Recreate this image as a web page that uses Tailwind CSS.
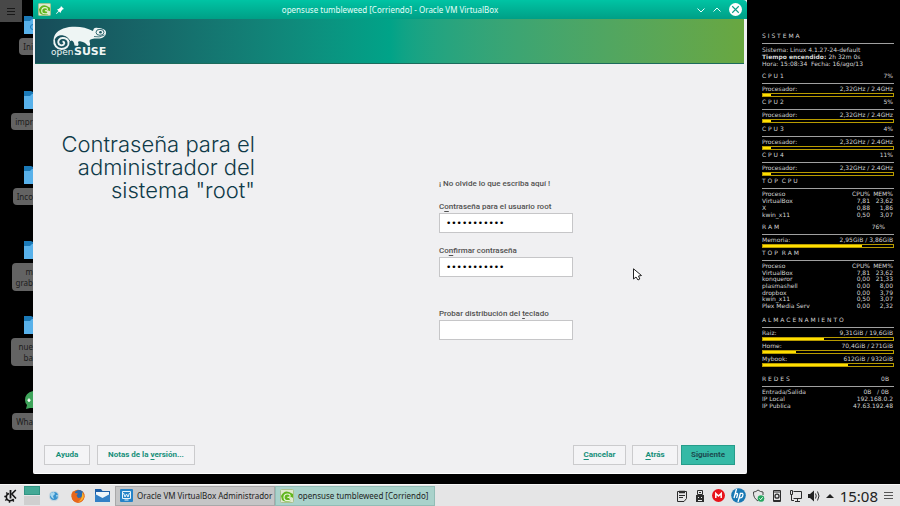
<!DOCTYPE html>
<html lang="es">
<head>
<meta charset="utf-8">
<title>Escritorio</title>
<script src="https://cdn.jsdelivr.net/npm/@tailwindcss/browser@4"></script>
</head>
<body class="h-screen flex flex-col overflow-hidden bg-black font-['Noto_Sans','Liberation_Sans',sans-serif]">
<svg class="hidden">
  <symbol id="folder" viewBox="0 0 9 18"><path d="M0 0H7L9 1V18H0Z" fill="#1b7ab8"/><path d="M0 5H6L8 3H9V18H0Z" fill="#58b1ea"/></symbol>
  <symbol id="gecko" viewBox="0 0 14 14"><rect x=".5" y=".5" width="13" height="13" rx="1" fill="#dfe8cf" stroke="#a9c08c"/><path d="M1 7Q4 1 9 3L13 5V9Q11 7 9 9L11 12Q5 14 2 11Z" fill="#62b51f"/><path d="M11 11Q4 13 4 8.500Q4 5 7.500 5Q10.500 5 10 7.500Q9 9 7.500 8" fill="none" stroke="#eaf6d8" stroke-width="1.200"/></symbol>
</svg>

<main class="flex flex-1 min-h-0">
  <nav class="w-[33px] shrink-0 overflow-hidden" aria-label="Escritorio">
    <button class="absolute left-0 top-0 size-[22px] bg-[#484848] flex items-center justify-center" aria-label="Menú">
      <svg class="w-2 h-2" viewBox="0 0 8 8" stroke="#191919"><path d="M0 1.500H8M0 4.500H8M0 7.500H8"/></svg>
    </button>
    <ul class="mt-4 text-[8px] leading-[11px] text-[#1c1c1c] text-right">
      <li class="h-[75px] flex flex-col items-end gap-1"><svg class="w-[9px] h-[18px] shrink-0"><use href="#folder"/><circle cx="9" cy="11" r="2.500" fill="none" stroke="#1b7ab8"/></svg><span class="rounded-l-sm bg-[#636363] pl-1 py-[3px]">Ini</span></li>
      <li class="h-[75px] flex flex-col items-end gap-1"><svg class="w-[9px] h-[18px] shrink-0"><use href="#folder"/></svg><span class="rounded-l-sm bg-[#636363] pl-1 py-[3px]">impr</span></li>
      <li class="h-[75px] flex flex-col items-end gap-1"><svg class="w-[9px] h-[18px] shrink-0"><use href="#folder"/></svg><span class="rounded-l-sm bg-[#636363] pl-1 py-[3px]">Inco</span></li>
      <li class="h-[75px] flex flex-col items-end gap-1"><svg class="w-[9px] h-[18px] shrink-0"><use href="#folder"/></svg><span class="rounded-l-sm bg-[#636363] pl-1 py-[3px]">m<br>grab</span></li>
      <li class="h-[75px] flex flex-col items-end gap-1"><svg class="w-[9px] h-[18px] shrink-0"><use href="#folder"/></svg><span class="rounded-l-sm bg-[#636363] pl-2 py-[3px]">nue<br>ba</span></li>
      <li class="h-[75px] flex flex-col items-end gap-1"><svg class="w-[9px] h-[18px] shrink-0" viewBox="0 0 9 18"><path d="M9 0Q1 2 1 9Q1 12 3 14L2 18L6 17H9Z" fill="#3fa45b"/><path d="M5 7.500V11M3.500 9.200H6.500" stroke="#fff" stroke-width="1.500"/></svg><span class="rounded-l-sm bg-[#636363] pl-1 py-[3px]">Wha</span></li>
    </ul>
  </nav>

  <section class="relative flex-1 min-w-0 mb-[10px] flex flex-col rounded-b-[2px] bg-[#f0f0f2] border-b border-b-white">
    <header class="h-[19px] shrink-0 flex items-center px-[5px] bg-linear-to-b from-[#00c4a4] to-[#009f86] rounded-tr-sm">
      <div class="w-16 flex items-center gap-[5px]">
        <svg class="size-[13px]"><use href="#gecko"/></svg>
        <svg class="size-2" viewBox="0 0 8 8"><path d="M5 0L8 3L6.500 3.500L5 5.500L4.500 7L3 5.500L.5 8L0 7.500L2.500 5L1 3.500L2.500 3L4.500 1.500Z" fill="#fff"/></svg>
      </div>
      <h1 class="flex-1 text-center text-[8px] leading-[12px] text-[#e4fff9] whitespace-nowrap">opensuse tumbleweed [Corriendo] - Oracle VM VirtualBox</h1>
      <div class="w-16 flex items-center justify-end gap-2">
        <button aria-label="Minimizar"><svg class="w-2 h-2" viewBox="0 0 8 8" fill="none" stroke="#e9fffb"><path d="M.5 2.500L4 6L7.500 2.500"/></svg></button>
        <button aria-label="Maximizar"><svg class="w-2 h-2" viewBox="0 0 8 8" fill="none" stroke="#e9fffb"><path d="M.5 5.500L4 2L7.500 5.500"/></svg></button>
        <button aria-label="Cerrar"><svg class="size-[13px]" viewBox="0 0 12 12"><circle cx="6" cy="6" r="6" fill="#fff"/><path d="M3 3L9 9M9 3L3 9" stroke="#0b9d87"/></svg></button>
      </div>
    </header>

    <div class="flex-1 min-h-0 flex flex-col ml-[2px] mr-[3px]">
      <div class="h-[45px] shrink-0 border-b border-b-[#1c6b5c] bg-linear-to-r from-[#174c59] from-0% via-[#00a388] via-50% to-[#69a740] to-100%">
        <svg class="w-[80px] h-[44px]" viewBox="35 19 80 44" role="img" aria-label="openSUSE">
          <path d="M53.500 40C54 32 61 28.500 69 27C78 26 86 27 93 31C93.500 28 95 27 98 28C102 28 106 30 106 32C106.500 37 101 39 97 38.500C93 38.500 90.500 39 89.500 40.500C89.500 43 91 44 89.500 46L87.500 45.500Q85 42 81 41.500C79.500 41 78.500 41 78 42C78.500 44 79 45 77.500 46L74.500 45.500Q74 41 71.500 40.500L68.500 42C68 37.500 65 35.500 61.500 35.500C57.500 35.500 55 37.500 54.500 41Z" fill="#eef5f4"/>
          <path d="M54.300 40C53.500 45 57 49 61.500 49C66 49 69 46 68.500 42.500C68 39.500 65.500 37.800 62.500 38C59.500 38.200 58 40.500 58.300 42.500C58.700 45.500 62 46 63.700 44.500C65 43 64 41.500 62.500 41.700" fill="none" stroke="#eef5f4" stroke-width="1.900"/>
          <path d="M55.500 41.500C56 37.500 59 35.800 62 35.900C66 36 69 38.500 70 41.500" fill="none" stroke="#174f5b" stroke-width=".9"/>
          <ellipse cx="100" cy="32.300" rx="4" ry="3" fill="none" stroke="#1d5a62" stroke-width=".9"/><circle cx="100.500" cy="32.300" r="1.300" fill="#1d5a62"/>
          <path d="M94 36.500Q99 38 104.500 35" fill="none" stroke="#1d5a62" stroke-width=".8"/>
          <text x="51" y="55" font-family="DejaVu Sans" font-size="9" fill="#eef5f4">open</text>
          <text x="74" y="55" font-family="DejaVu Sans" font-weight="bold" font-size="11" fill="#eef5f4">SUSE</text>
        </svg>
      </div>

      <div class="flex-1 flex font-[Roboto,'Liberation_Sans',sans-serif]">
        <h2 class="w-[220px] pt-[69px] flex flex-col items-end font-[Inter,sans-serif] font-light text-[22px] leading-[23px] text-[#0f3a48] whitespace-nowrap"><span>Contraseña para el</span><span>administrador del</span><span>sistema "root"</span></h2>
        <form id="clave" class="ml-[184px] w-[134px] pt-[114px] text-[8px] leading-[12px] font-medium text-[#505050] whitespace-nowrap">
          <p>¡ No olvide lo que escriba aquí !</p>
          <label for="p1" class="block mt-[11px]">C<span class="underline underline-offset-2">o</span>ntraseña para el usuario root</label>
          <input id="p1" type="password" value="tumbleweed1" class="block w-full h-5 px-[6px] bg-white border border-[#c6c6c8] text-[9px] text-black font-['DejaVu_Sans',sans-serif]">
          <label for="p2" class="block mt-[12px]">Co<span class="underline underline-offset-2">n</span>firmar contraseña</label>
          <input id="p2" type="password" value="tumbleweed1" class="block w-full h-5 px-[6px] bg-white border border-[#c6c6c8] text-[9px] text-black font-['DejaVu_Sans',sans-serif]">
          <label for="p3" class="block mt-[31px]">Probar distribución del <span class="underline underline-offset-2">t</span>eclado</label>
          <input id="p3" type="text" class="block w-full h-5 px-[6px] bg-white border border-[#c6c6c8] text-[9px]">
        </form>
      </div>

      <footer class="flex items-center pl-[9px] pr-[9px] pb-[8px] text-[8px] font-bold text-[#168f79] font-[Roboto,'Liberation_Sans',sans-serif]">
        <button class="h-5 w-[46px] border border-[#cbcbcd] bg-[#f4f4f6]">Ayuda</button>
        <button class="h-5 w-[98px] ml-[7px] border border-[#cbcbcd] bg-[#f4f4f6]">Notas de la <span class="underline underline-offset-2">v</span>ersión...</button>
        <button class="h-5 w-[53px] ml-auto border border-[#cbcbcd] bg-[#f4f4f6]"><span class="underline underline-offset-2">C</span>ancelar</button>
        <button class="h-5 w-[46px] ml-[6px] border border-[#cbcbcd] bg-[#f4f4f6]"><span class="underline underline-offset-2">A</span>trás</button>
        <button form="clave" class="h-5 w-[54px] ml-[3px] border border-[#269c8a] bg-[#35b9a6] text-[#1c4c50]">S<span class="underline underline-offset-2">i</span>guiente</button>
      </footer>
    </div>
    <svg class="absolute left-[600px] top-[268px] w-[9px] h-[13px]" viewBox="0 0 9 13"><path d="M.5 .8V11L3 9L5 12L6.800 11L5.500 8L8.500 7.500Z" fill="#fff" stroke="#222"/></svg>
  </section>

  <aside class="w-[153px] shrink-0 pl-[15px] pr-[6px] pt-[31px] font-['DejaVu_Sans',sans-serif] text-[6px] leading-[9px] text-[#d4d4d4] whitespace-nowrap">
    <h3 class="leading-[10px] pb-[2px] border-b border-[#a0a0a0]">S I S T E M A</h3>
    <div class="pt-[2px] leading-[7px]">
      <p>Sistema: Linux 4.1.27-24-default</p><p class="font-bold">Tiempo encendido: <span class="font-normal">2h 32m 0s</span></p><p>Hora: 15:08:34&nbsp; Fecha: 16/ago/13</p>
    </div>
    <div class="mt-1 h-[105px] grid grid-rows-4">
      <div><h3 class="flex justify-between leading-[10px] pr-px pb-[2px] border-b border-[#a0a0a0]">C P U 1<span>7%</span></h3><p class="flex justify-between pr-px">Procesador:<span>2,32GHz / 2.4GHz</span></p><div class="h-1 border border-[#b89b00]"><div class="h-full bg-[#ffdf00]" style="width:6%"></div></div></div>
      <div><h3 class="flex justify-between leading-[10px] pr-px pb-[2px] border-b border-[#a0a0a0]">C P U 2<span>5%</span></h3><p class="flex justify-between pr-px">Procesador:<span>2,32GHz / 2.4GHz</span></p><div class="h-1 border border-[#b89b00]"><div class="h-full bg-[#ffdf00]" style="width:6%"></div></div></div>
      <div><h3 class="flex justify-between leading-[10px] pr-px pb-[2px] border-b border-[#a0a0a0]">C P U 3<span>4%</span></h3><p class="flex justify-between pr-px">Procesador:<span>2,32GHz / 2.4GHz</span></p><div class="h-1 border border-[#b89b00]"><div class="h-full bg-[#ffdf00]" style="width:6%"></div></div></div>
      <div><h3 class="flex justify-between leading-[10px] pr-px pb-[2px] border-b border-[#a0a0a0]">C P U 4<span>11%</span></h3><p class="flex justify-between pr-px">Procesador:<span>2,32GHz / 2.4GHz</span></p><div class="h-1 border border-[#b89b00]"><div class="h-full bg-[#ffdf00]" style="width:6%"></div></div></div>
    </div>
    <h3 class="leading-[10px] pb-[2px] border-b border-[#a0a0a0]">T O P&nbsp; C P U</h3>
    <table class="w-full h-[27px] mt-[2px] leading-[6px] text-right">
      <tr><th class="font-normal text-left">Proceso</th><th class="font-normal w-6">CPU%</th><th class="font-normal w-6 pr-px">MEM%</th></tr>
      <tr><td class="text-left">VirtualBox</td><td>7,81</td><td class="pr-px">23,62</td></tr>
      <tr><td class="text-left">X</td><td>0,88</td><td class="pr-px">1,86</td></tr>
      <tr><td class="text-left">kwin_x11</td><td>0,50</td><td class="pr-px">3,07</td></tr>
    </table>
    <h3 class="mt-1 flex justify-between leading-[10px] pb-[2px] pr-[9px] border-b border-[#a0a0a0]">R A M<span>76%</span></h3>
    <p class="flex justify-between pr-px">Memoria:<span>2,95GiB / 3,86GiB</span></p><div class="h-1 border border-[#b89b00]"><div class="h-full bg-[#ffdf00]" style="width:76%"></div></div>
    <h3 class="leading-[10px] pb-[2px] border-b border-[#a0a0a0]">T O P&nbsp; R A M</h3>
    <table class="w-full h-[46px] mt-[2px] leading-[6px] text-right">
      <tr><th class="font-normal text-left">Proceso</th><th class="font-normal w-6">CPU%</th><th class="font-normal w-6 pr-px">MEM%</th></tr>
      <tr><td class="text-left">VirtualBox</td><td>7,81</td><td class="pr-px">23,62</td></tr>
      <tr><td class="text-left">konqueror</td><td>0,00</td><td class="pr-px">21,33</td></tr>
      <tr><td class="text-left">plasmashell</td><td>0,00</td><td class="pr-px">8,00</td></tr>
      <tr><td class="text-left">dropbox</td><td>0,00</td><td class="pr-px">3,79</td></tr>
      <tr><td class="text-left">kwin_x11</td><td>0,50</td><td class="pr-px">3,07</td></tr>
      <tr><td class="text-left">Plex Media Serv</td><td>0,00</td><td class="pr-px">2,32</td></tr>
    </table>
    <h3 class="mt-[6px] leading-[10px] pb-[2px] border-b border-[#a0a0a0]">A L M A C E N A M I E N T O</h3>
    <p class="flex justify-between pr-px">Raiz:<span>9,31GiB / 19,6GiB</span></p><div class="h-1 border border-[#b89b00]"><div class="h-full bg-[#ffdf00]" style="width:47%"></div></div>
    <p class="flex justify-between pr-px">Home:<span>70,4GiB / 271GiB</span></p><div class="h-1 border border-[#b89b00]"><div class="h-full bg-[#ffdf00]" style="width:25%"></div></div>
    <p class="flex justify-between pr-px">Mybook:<span>612GiB / 932GiB</span></p><div class="h-1 border border-[#b89b00]"><div class="h-full bg-[#ffdf00]" style="width:65%"></div></div>
    <h3 class="mt-[7px] flex justify-between leading-[10px] pb-[2px] pr-[5px] border-b border-[#a0a0a0]">R E D E S<span>0B</span></h3>
    <table class="w-full h-5 mt-[2px] leading-[6px]">
      <tr><th class="font-normal text-left">Entrada/Salida</th><td class="text-right pr-[5px]">0B&nbsp;&nbsp; / 0B</td></tr>
      <tr><th class="font-normal text-left">IP Local</th><td class="text-right pr-px">192.168.0.2</td></tr>
      <tr><th class="font-normal text-left">IP Publica</th><td class="text-right pr-px">47.63.192.48</td></tr>
    </table>
  </aside>
</main>

<footer class="h-[22px] shrink-0 flex items-center bg-[#e5e5e6] border-t border-t-[#f8f8f8] text-[#222]">
  <button class="ml-1 size-[14px]" aria-label="Menú de aplicaciones">
    <svg viewBox="0 0 14 14" fill="none" stroke="#161616"><path d="M5 4.500Q2.200 5.500 2.300 8Q2.500 11.500 6 11.700Q8.500 11.700 9.700 10" stroke-width="1.600"/><path d="M3.500 4.800L2.300 3.500M2 7.500H.3M2.700 10.200L1.300 11.500M5.500 12V13.700M8.800 11.200L9.800 12.500" stroke-width="1.500"/><path d="M6.500 1V9.500" stroke-width="1.800"/><path d="M11.800 1L7.800 5L12 9.500" stroke-width="1.600"/></svg>
  </button>
  <div class="ml-[6px] w-4 flex flex-col gap-px"><button class="h-[9px] bg-[#44a996] border border-[#309482]" aria-label="Escritorio 1"></button><button class="h-[9px] bg-[#cfcfcf]" aria-label="Escritorio 2"></button></div>
  <button class="ml-2 size-3" aria-label="Navegador"><svg viewBox="0 0 12 12"><circle cx="6" cy="6" r="5.200" fill="#c5d5df"/><circle cx="6" cy="6" r="4" fill="#3792ce"/><path d="M3 3L6 2L7 4L5 6L6 9L4 8L2 5ZM8 5L10 5L9 8Z" fill="#a9d8ef"/></svg></button>
  <button class="ml-[11px] size-[14px]" aria-label="Firefox"><svg viewBox="0 0 14 14"><circle cx="7" cy="7.200" r="6.500" fill="#e4701e"/><circle cx="8" cy="5.500" r="4.500" fill="#2b6cb0"/><path d="M.6 5L2 2L4 4L7 4.500L5.500 6.500L7 9L10 8.500Q13 6 11.500 2Q14 5 13.500 8Q12 13.500 7 13.700Q1 13 .6 7Z" fill="#e8661b"/><path d="M11 3Q14 7 12 10Q10 13 7 13Q12 10 11 3Z" fill="#fbb62b"/></svg></button>
  <button class="ml-[10px] w-[15px] h-[13px]" aria-label="Correo"><svg viewBox="0 0 15 13"><path d="M0 0H6L7.500 2H15V13H0Z" fill="#1d5fa8"/><path d="M1 3H14V6L7.500 10L1 6Z" fill="#eef5fa"/><path d="M0 5L7.500 9L15 5V13H0Z" fill="#3380c6"/></svg></button>
  <button class="ml-[5px] w-40 h-5 pl-1 flex items-center gap-1 overflow-hidden bg-[#c5c5c6] border border-[#a8a8a9] text-[8px] whitespace-nowrap">
    <svg class="size-[13px] shrink-0" viewBox="0 0 13 13"><rect width="13" height="13" rx="1" fill="#2583c8"/><path d="M2.500 2.500H10.500V9.500H2.500ZM4.500 11H8.500M3.500 4L5 8L6.500 5L8 8L9.500 4" fill="none" stroke="#e8f4fc"/></svg>Oracle VM VirtualBox Administrador</button>
  <button class="w-40 h-5 pl-1 flex items-center gap-1 overflow-hidden bg-[#a9d2cb] border border-[#91bdb6] text-[8px] whitespace-nowrap">
    <svg class="size-[14px] shrink-0"><use href="#gecko"/></svg>opensuse tumbleweed [Corriendo]</button>
  <div class="ml-auto mr-[7px] flex items-center gap-[6px]">
    <div class="flex items-center gap-[6px]">
      <svg class="w-[12px] h-[12px]" viewBox="0 0 12 12" fill="none" stroke="#2c2c2c"><path d="M1.500 1.500H10.500V8.500L8 11.500H1.500ZM3 5.500H9M3 7.500H7"/><path d="M3 2H9" stroke-width="2.500"/></svg>
      <svg class="w-[12px] h-[12px]" viewBox="0 0 12 12" fill="none" stroke="#2c2c2c"><path d="M3.500 .5H8.500V4.500H3.500Z"/><path d="M2 5H10V12H2Z" fill="#2c2c2c" stroke="none"/><path d="M4 7.500H5M7 7.500H8M4 10.500H8" stroke="#eee"/><path d="M5 2.500H7"/></svg>
      <svg class="w-[13px] h-[13px]" viewBox="0 0 13 13"><circle cx="6.500" cy="6.500" r="6.500" fill="#e8131b"/><path d="M3.800 9V4.500L6.500 7L9.200 4.500V9" fill="none" stroke="#fff" stroke-width="1.500"/></svg>
      <svg class="w-[15px] h-[15px]" viewBox="0 0 15 15"><circle cx="7.500" cy="7.500" r="7.300" fill="#1878b4"/><path d="M5.500 1L3 10M4 6.500Q7 4 6.500 7L5.500 10M9.500 5L7 14M9 5.300H11.500Q12.500 6 11.500 8.500Q11 10 8.500 9.800" fill="none" stroke="#fff" stroke-width="1.300"/></svg>
      <svg class="w-[13px] h-[13px]" viewBox="0 0 13 13" fill="none" stroke="#444"><path d="M6 12Q1 9 1.500 3Q4 3 6 1Q8.500 3 11 3V6"/><circle cx="9" cy="9.500" r="3.300" fill="#27a760" stroke="none"/><path d="M7.500 9.500L8.700 10.700L10.700 8.300" stroke="#fff"/></svg>
      <svg class="w-[12px] h-[12px]" viewBox="0 0 12 12" fill="none" stroke="#2c2c2c"><path d="M2.500 .5H9.500V11.500H2.500Z"/><path d="M3 2H9M3 10.500H9"/><circle cx="6" cy="6.200" r="2" stroke-width="1.300"/></svg>
      <svg class="w-[13px] h-[12px]" viewBox="0 0 13 12" fill="none" stroke="#2c2c2c"><path d="M4.500 1.500H12.500V8.500H4.500M6 11.500H11M8.500 8.500V11M1.500 .5H3.500V4.500H1.500ZM2.500 5V10.500H5"/></svg>
      <svg class="w-[12px] h-[12px]" viewBox="0 0 12 12" fill="none" stroke="#2c2c2c"><path d="M0 4H2L6 .5V11.500L2 8H0Z" fill="#222" stroke="none"/><path d="M7.500 3.500Q9 6 7.500 8.500M9.500 1.500Q12.500 6 9.500 10.500"/></svg>
    </div>
    <svg class="w-2 h-2" viewBox="0 0 8 8"><path d="M0 6L4 2L8 6Z" fill="#222"/></svg>
    <time class="text-[15px] leading-5">15:08</time>
    <button aria-label="Opciones del panel"><svg class="w-[9px] h-2" viewBox="0 0 9 8" stroke="#555"><path d="M0 .5H9M0 3.500H9M0 6.500H9"/></svg></button>
  </div>
</footer>
</body>
</html>
